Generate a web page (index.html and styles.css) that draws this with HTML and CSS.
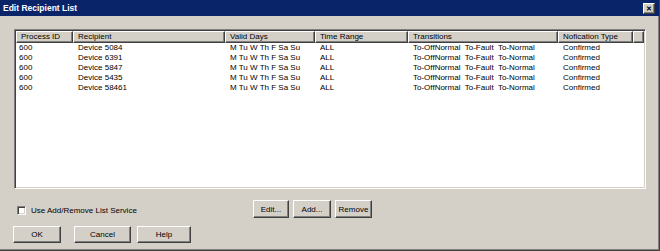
FILE: index.html
```html
<!DOCTYPE html>
<html>
<head>
<meta charset="utf-8">
<title>Edit Recipient List</title>
<link rel="stylesheet" href="styles.css">
</head>
<body>
<div class="window">
  <div class="titlebar">
    <span class="title">Edit Recipient List</span>
    <span class="close">&#x2715;</span>
  </div>
  <div class="content">
    <div class="listview">
      <div class="row header">
        <div class="c c1">Process ID</div>
        <div class="c c2">Recipient</div>
        <div class="c c3">Valid Days</div>
        <div class="c c4">Time Range</div>
        <div class="c c5">Transitions</div>
        <div class="c c6">Nofication Type</div>
        <div class="c c7"></div>
      </div>
      <div class="row item"><div class="c c1">600</div><div class="c c2">Device 5084</div><div class="c c3">M Tu W Th F Sa Su</div><div class="c c4">ALL</div><div class="c c5">To-OffNormal&nbsp; To-Fault&nbsp; To-Normal</div><div class="c c6">Confirmed</div></div>
      <div class="row item"><div class="c c1">600</div><div class="c c2">Device 6391</div><div class="c c3">M Tu W Th F Sa Su</div><div class="c c4">ALL</div><div class="c c5">To-OffNormal&nbsp; To-Fault&nbsp; To-Normal</div><div class="c c6">Confirmed</div></div>
      <div class="row item"><div class="c c1">600</div><div class="c c2">Device 5847</div><div class="c c3">M Tu W Th F Sa Su</div><div class="c c4">ALL</div><div class="c c5">To-OffNormal&nbsp; To-Fault&nbsp; To-Normal</div><div class="c c6">Confirmed</div></div>
      <div class="row item"><div class="c c1">600</div><div class="c c2">Device 5435</div><div class="c c3">M Tu W Th F Sa Su</div><div class="c c4">ALL</div><div class="c c5">To-OffNormal&nbsp; To-Fault&nbsp; To-Normal</div><div class="c c6">Confirmed</div></div>
      <div class="row item"><div class="c c1">600</div><div class="c c2">Device 58461</div><div class="c c3">M Tu W Th F Sa Su</div><div class="c c4">ALL</div><div class="c c5">To-OffNormal&nbsp; To-Fault&nbsp; To-Normal</div><div class="c c6">Confirmed</div></div>
    </div>
    <div class="opt-row">
      <label class="check"><span class="box"></span><span>Use Add/Remove List Service</span></label>
      <div class="btn-group">
        <button class="btn b-edit">Edit...</button>
        <button class="btn b-add">Add...</button>
        <button class="btn b-remove">Remove</button>
      </div>
    </div>
    <div class="footer">
      <button class="btn b-ok">OK</button>
      <button class="btn b-cancel">Cancel</button>
      <button class="btn b-help">Help</button>
    </div>
  </div>
</div>
</body>
</html>
```

FILE: styles.css
```css
* { box-sizing: border-box; }
html, body { margin: 0; padding: 0; }
body {
  width: 660px;
  height: 251px;
  background: #d4d0c8;
  font-family: "Liberation Sans", Arial, sans-serif;
  font-size: 8px;
  color: #000;
  overflow: hidden;
}
.window {
  width: 660px;
  height: 251px;
  background: #d4d0c8;
  border-right: 1px solid #404040;
  border-bottom: 1px solid #404040;
  box-shadow: inset -1px -1px 0 #808080;
}
.titlebar {
  height: 16px;
  background: #0a246a;
  display: flex;
  align-items: center;
  justify-content: space-between;
  padding: 0 4px 0 3px;
}
.title {
  color: #fff;
  font-weight: bold;
  font-size: 8.5px;
}
.close {
  width: 12px;
  height: 11px;
  background: #d4d0c8;
  border-top: 1px solid #fff;
  border-left: 1px solid #fff;
  border-right: 1px solid #404040;
  border-bottom: 1px solid #404040;
  box-shadow: inset -1px -1px 0 #808080;
  font-size: 7px;
  font-weight: bold;
  line-height: 9px;
  text-align: center;
  color: #000;
}
.content {
  padding: 13px 0 0 14px;
}
.listview {
  width: 632px;
  height: 160px;
  background: #fff;
  border-top: 1px solid #808080;
  border-left: 1px solid #808080;
  border-right: 1px solid #fff;
  border-bottom: 1px solid #fff;
  box-shadow: inset 1px 1px 0 #404040, inset -1px -1px 0 #d4d0c8;
  padding: 1px;
}
.row { display: flex; }
.header { height: 12px; }
.header .c {
  background: #d4d0c8;
  border-top: 1px solid #fff;
  border-left: 1px solid #fff;
  border-right: 1px solid #404040;
  border-bottom: 1px solid #404040;
  box-shadow: inset -1px -1px 0 #808080;
  padding-left: 4px;
  line-height: 10px;
}
.item { height: 10px; }
.item .c { line-height: 10px; padding-left: 5px; white-space: pre; }
.item .c1 { padding-left: 3px; }
.c { flex: none; white-space: nowrap; overflow: hidden; }
.c1 { width: 57px; }
.c2 { width: 152px; }
.c3 { width: 90px; }
.c4 { width: 93px; }
.c5 { width: 150px; }
.c6 { width: 75px; }
.c7 { flex: 1; }
.opt-row {
  display: flex;
  align-items: center;
  margin-top: 11px;
  height: 18px;
}
.check {
  display: flex;
  align-items: center;
  width: 239px;
  padding-left: 3px;
  margin-top: 2px;
}
.box {
  width: 9px;
  height: 9px;
  background: #fff;
  border-top: 1px solid #808080;
  border-left: 1px solid #808080;
  border-right: 1px solid #fff;
  border-bottom: 1px solid #fff;
  box-shadow: inset 1px 1px 0 #404040, inset -1px -1px 0 #d4d0c8;
  margin-right: 5px;
}
.btn-group { display: flex; gap: 4px; }
.btn {
  font-family: "Liberation Sans", Arial, sans-serif;
  font-size: 8px;
  color: #000;
  background: #d4d0c8;
  border-top: 1px solid #fff;
  border-left: 1px solid #fff;
  border-right: 1px solid #404040;
  border-bottom: 1px solid #404040;
  box-shadow: inset -1px -1px 0 #808080;
  padding: 0;
  margin: 0;
  height: 18px;
}
.b-edit { width: 36px; }
.b-add { width: 38px; }
.b-remove { width: 37px; }
.footer {
  display: flex;
  margin-top: 8px;
  height: 17px;
  padding-left: -1px;
}
.footer .btn { height: 17px; }
.b-ok { width: 48px; margin-left: -1px; }
.b-cancel { width: 57px; margin-left: 13px; }
.b-help { width: 54px; margin-left: 6px; }
```
